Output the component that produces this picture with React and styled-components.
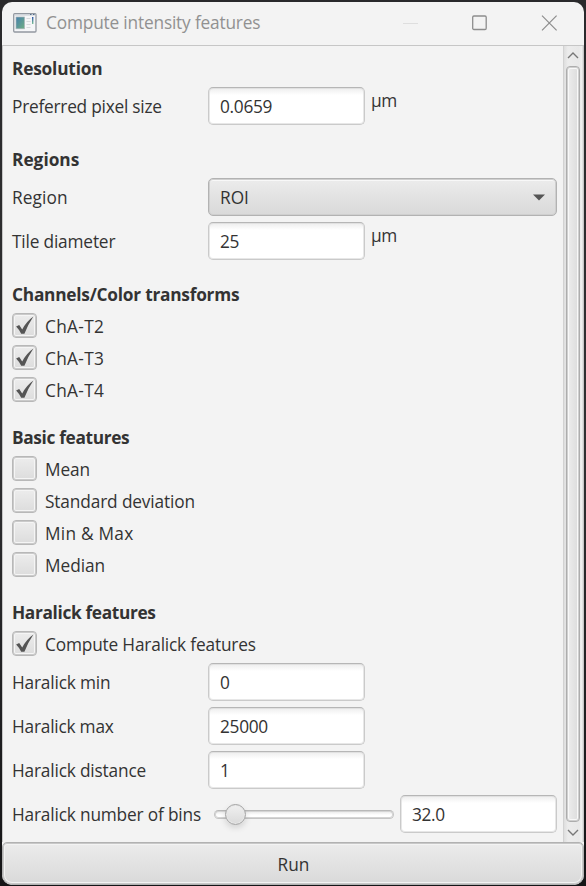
import React from "react";
import styled, { createGlobalStyle } from "styled-components";

const GlobalStyle = createGlobalStyle`
  * { box-sizing: border-box; }
  html, body { margin: 0; background: #18181a; }
  body, button, input {
    font-family: "Open Sans", "Noto Sans", sans-serif;
    font-size: 17.3px;
    color: #333;
  }
`;

const Desktop = styled.div`
  width: 586px;
  height: 886px;
  padding: 2px 2px 1px;
  background: linear-gradient(#29292b, #303032 50%, #151517);
`;

const Window = styled.main`
  width: 582px;
  height: 883px;
  display: flex;
  flex-direction: column;
  overflow: hidden;
  border-radius: 10px;
  background: #f3f3f3;
`;

const TitleBar = styled.header`
  height: 43px;
  flex: none;
  display: flex;
  align-items: center;
  padding: 0 25px 2px 11px;
`;

const Text = styled.span`
  letter-spacing: ${(p) => p.$track || 0}px;
  white-space: nowrap;
  line-height: 24px;
`;

const Title = styled(Text)`
  flex: 1;
  margin-left: 9px;
  color: #919191;
`;

const Controls = styled.div`
  display: flex;
  align-items: center;
  gap: 53px;
`;

const Body = styled.div`
  height: 797px;
  flex: none;
  display: flex;
  border: solid #c6c6c6;
  border-width: 1px 1px 0;
`;

const Form = styled.div`
  flex: 1;
  display: flex;
  flex-direction: column;
  gap: 23px;
  padding: 11px 6px 0 9px;
`;

const Section = styled.section`
  display: flex;
  flex-direction: column;
  gap: 6px;
`;

const Heading = styled.h2`
  margin: 0;
  height: 24px;
  font-size: 17.3px;
  line-height: 24px;
  font-weight: 700;
  letter-spacing: ${(p) => p.$track || 0}px;
`;

const Row = styled.div`
  height: 38px;
  display: grid;
  grid-template-columns: 196px 349px;
  align-items: center;
`;

const Label = styled(Text)`
  padding-top: 2px;
`;

const FieldArea = styled.div`
  height: 38px;
  display: flex;
`;

const Input = styled.input`
  width: 157px;
  height: 38px;
  padding: 1px 11px 0;
  border: 1px solid #cacaca;
  border-top-color: #b6b6b6;
  border-radius: 5px;
  outline: none;
  background: linear-gradient(#ededed, #fff 7px);
  box-shadow: inset 0 0 0 1px #d9d9d9a0;
  letter-spacing: ${(p) => p.$track || 0}px;
`;

const Unit = styled(Text)`
  margin: 2px 0 0 6px;
`;

const Combo = styled.button`
  width: 349px;
  height: 38px;
  display: flex;
  align-items: center;
  justify-content: space-between;
  padding: 1px 11px 0;
  border: 1px solid #b2b2b2;
  border-radius: 5px;
  background: linear-gradient(#ececec, #d9d9d9);
  box-shadow: inset 0 0 0 1px #cfcfcf, inset 0 2px #f8f8f8;
`;

const CheckRow = styled.label`
  height: 26px;
  display: flex;
  align-items: center;
  gap: 8px;
`;

const Box = styled.span`
  width: 25px;
  height: 25px;
  margin-bottom: 1px;
  display: grid;
  place-items: center;
  border: 1px solid #b8b8b8;
  border-radius: 4px;
  background: linear-gradient(#ededed, #dcdcdc);
  box-shadow: inset 0 0 0 1px #cacaca, inset 0 0 0 2px #f5f5f5;
`;

const Slider = styled.div`
  width: 192px;
  display: flex;
  align-items: center;
  padding: 0 6px;
`;

const Track = styled.div`
  width: 180px;
  height: 9px;
  display: flex;
  align-items: center;
  padding-left: 10px;
  border: 1px solid #c5c5c5;
  border-top-color: #b8b8b8;
  border-radius: 5px;
  background: linear-gradient(#e6e6e6, #fff 4px);
  box-shadow: inset 0 0 0 1px #d4d4d4;
`;

const Knob = styled.div`
  width: 21px;
  height: 21px;
  flex: none;
  border: 1.5px solid #a2a2a2;
  border-radius: 50%;
  background: linear-gradient(#f0f0f0, #dadada);
  box-shadow: inset 0 0 0 1px #e6e6e6, 0 3px 6px #0002;
`;

const ScrollBar = styled.div`
  width: 20px;
  display: flex;
  flex-direction: column;
  align-items: center;
  padding: 6px 1px 6px 0;
  border-left: 1px solid #d2d2d2;
  border-right: 1px solid #e0e0e0;
  background: linear-gradient(90deg, #dedede, #ececec 4px, #e8e8e8 15px, #f1f1f1);
`;

const ScrollThumb = styled.div`
  width: 14px;
  height: 756px;
  margin: 7px 0;
  border: 1px solid #adadad;
  border-radius: 4px;
  background: linear-gradient(90deg, #eee, #dbdbdb);
  box-shadow: inset 0 0 0 1px #cfcfcf, inset 0 0 0 2px #f8f8f8;
`;

const RunButton = styled.button`
  width: 582px;
  height: 43px;
  flex: none;
  padding: 1px 0 0 1px;
  border: 1px solid #b2b2b2;
  border-radius: 5px 5px 10px 10px;
  background: linear-gradient(#ececec, #d9d9d9);
  box-shadow: inset 0 0 0 1px #c8c8c8, inset 0 0 0 2px #f3f3f3;
`;

function AppIcon() {
  return (
    <svg width="24" height="20" viewBox="0 0 24 20">
      <defs>
        <linearGradient id="screen" x1="0" y1="0" x2="1" y2="1">
          <stop offset="0" stopColor="#4680ad" />
          <stop offset="1" stopColor="#6fae83" />
        </linearGradient>
        <linearGradient id="meter" x1="0" y1="0" x2="0" y2="1">
          <stop offset="0" stopColor="#3157ad" />
          <stop offset="1" stopColor="#7ac293" />
        </linearGradient>
      </defs>
      <rect x=".7" y=".7" width="22.3" height="18.3" rx="1" fill="#f5f6f8" stroke="#9298a0" strokeWidth="1.3" />
      <path d="M1.5 2H22.5" stroke="#c3c9d0" />
      <path d="M17 1.5h1.5M20 1.5h1.5" stroke="#536c8b" />
      <rect x="3" y="4" width="8.5" height="11.8" fill="url(#screen)" stroke="#aab4b8" strokeWidth=".7" />
      <path d="M13.5 5.5h4M13.5 8.5h4M13.5 11.5h4M13.5 14.5h4" stroke="#d7d9dc" />
      <rect x="19" y="4" width="1.4" height="7" fill="url(#meter)" />
    </svg>
  );
}

function Check({ label, track, checked }) {
  return (
    <CheckRow>
      <Box>
        {checked && (
          <svg width="21" height="21" viewBox="0 0 21 21">
            <path d="M2.1 11.5 5.2 10 8.2 14.5Q12.5 6.3 19.4 1.5Q14 9.5 10.4 18.8H7.2Q5.2 14.6 2.1 11.5Z" fill="#555" />
          </svg>
        )}
      </Box>
      <Label $track={track}>{label}</Label>
    </CheckRow>
  );
}

function Field({ label, track, value, unit, valueTrack = -0.3 }) {
  return (
    <Row>
      <Label $track={track}>{label}</Label>
      <FieldArea>
        <Input defaultValue={value} aria-label={label} $track={valueTrack} />
        {unit && <Unit $track={-0.5}>{unit}</Unit>}
      </FieldArea>
    </Row>
  );
}

function Chevron({ down }) {
  return (
    <svg width="12" height="7" viewBox="0 0 12 7">
      <path d={down ? "M1 1 6 6 11 1" : "M1 6 6 1 11 6"} fill="none" stroke="#777" strokeWidth="1.4" />
    </svg>
  );
}

export default function App() {
  return (
    <>
      <GlobalStyle />
      <Desktop>
        <Window>
          <TitleBar>
            <AppIcon />
            <Title $track={-0.18}>Compute intensity features</Title>
            <Controls>
              <svg width="16" height="16"><path d="M0 8.5H15" stroke="#dedede" /></svg>
              <svg width="16" height="16">
                <rect x=".7" y="1" width="13.5" height="13.5" rx="1.2" fill="none" stroke="#8d8d8d" strokeWidth="1.3" />
              </svg>
              <svg width="18" height="16">
                <path d="M1 .7 15.6 15.3M15.6.7 1 15.3" stroke="#8d8d8d" strokeWidth="1.2" />
              </svg>
            </Controls>
          </TitleBar>
          <Body>
            <Form>
              <Section>
                <Heading $track={-0.2}>Resolution</Heading>
                <Field label="Preferred pixel size" track={-0.24} value="0.0659" unit="µm" />
              </Section>
              <Section>
                <Heading $track={0}>Regions</Heading>
                <Row>
                  <Label $track={0.1}>Region</Label>
                  <Combo>
                    <Text $track={0}>ROI</Text>
                    <svg width="12" height="7"><path d="M0 .5H12L6 6.5Z" fill="#555" /></svg>
                  </Combo>
                </Row>
                <Field label="Tile diameter" track={-0.18} value="25" unit="µm" />
              </Section>
              <Section>
                <Heading $track={-0.24}>Channels/Color transforms</Heading>
                <Check label="ChA-T2" track={0.3} checked />
                <Check label="ChA-T3" track={0.3} checked />
                <Check label="ChA-T4" track={0.3} checked />
              </Section>
              <Section>
                <Heading $track={-0.35}>Basic features</Heading>
                <Check label="Mean" track={-0.15} />
                <Check label="Standard deviation" track={-0.14} />
                <Check label="Min & Max" track={0.25} />
                <Check label="Median" track={-0.05} />
              </Section>
              <Section>
                <Heading $track={-0.35}>Haralick features</Heading>
                <Check label="Compute Haralick features" track={-0.18} checked />
                <Field label="Haralick min" track={-0.18} value="0" />
                <Field label="Haralick max" track={-0.22} value="25000" />
                <Field label="Haralick distance" track={-0.18} value="1" />
                <Row>
                  <Label $track={-0.18}>Haralick number of bins</Label>
                  <FieldArea>
                    <Slider><Track><Knob /></Track></Slider>
                    <Input defaultValue="32.0" aria-label="Number of bins" $track={-0.35} />
                  </FieldArea>
                </Row>
              </Section>
            </Form>
            <ScrollBar>
              <Chevron />
              <ScrollThumb />
              <Chevron down />
            </ScrollBar>
          </Body>
          <RunButton>Run</RunButton>
        </Window>
      </Desktop>
    </>
  );
}
